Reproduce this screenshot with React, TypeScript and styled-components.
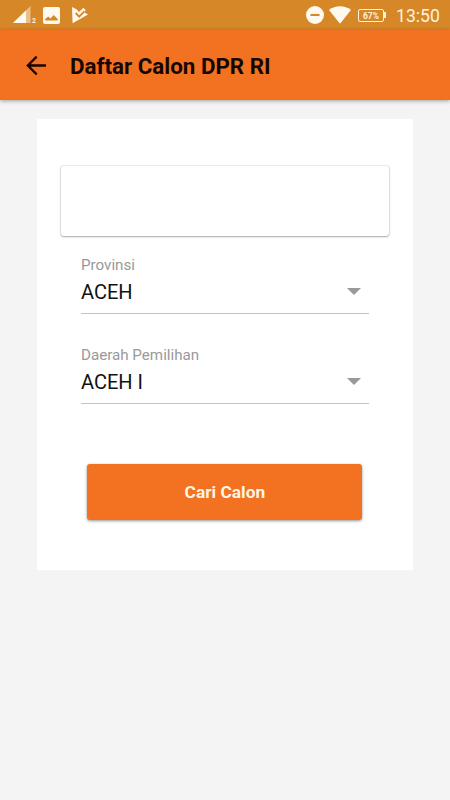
import React from "react";
import styled, { createGlobalStyle } from "styled-components";

const GlobalStyle = createGlobalStyle`
  *, *::before, *::after { box-sizing: border-box; }
  body { margin: 0; background: #f4f4f4; font-family: Roboto, sans-serif; }
`;

const Screen = styled.div`
  width: 450px;
  height: 800px;
  display: flex;
  flex-direction: column;
  background: #f4f4f4;
  overflow: hidden;
`;

const StatusBar = styled.div`
  height: 30px;
  flex: none;
  background: #d68728;
`;

const StatusRow = styled.div`
  height: 30px;
  display: flex;
  align-items: center;
  padding: 0 10px 0 12px;
  svg { display: block; flex: none; }
`;

const Spacer = styled.div`
  flex: 1;
`;

const Clock = styled.span`
  width: 44px;
  margin-left: 10px;
  font-size: 17.6px;
  line-height: 30px;
  color: #fff3dc;
  white-space: nowrap;
  padding-top: 1px;
`;

const SignalIndex = styled.span`
  font-size: 7px;
  font-weight: 700;
  line-height: 8px;
  color: #fff0d8;
  padding-top: 12px;
  width: 6px;
`;

const Battery = styled.div`
  display: flex;
  align-items: center;
  margin-left: 7px;
`;

const BatteryBody = styled.span`
  width: 26px;
  height: 13px;
  border: 1px solid #fff3dc;
  border-radius: 2px;
  color: #fff3dc;
  font-size: 8.5px;
  font-weight: 700;
  line-height: 12px;
  text-align: center;
`;

const BatteryTip = styled.span`
  width: 2px;
  height: 6px;
  background: #fff3dc;
`;

const Header = styled.header`
  height: 70px;
  flex: none;
  display: flex;
  align-items: center;
  background: #f37221;
  box-shadow: 0 1px 4px rgba(0, 0, 0, 0.35);
`;

const BackButton = styled.button`
  width: 24px;
  height: 24px;
  margin: 1px 0 0 24px;
  padding: 0;
  border: 0;
  background: none;
  svg { display: block; }
`;

const Title = styled.h1`
  margin: 1px 0 0 22px;
  font-size: 22.35px;
  font-weight: 700;
  line-height: 28px;
  color: #170500;
  white-space: nowrap;
`;

const Card = styled.main`
  width: 375.5px;
  height: 451px;
  margin: 19px 0 0 37px;
  padding: 47px 23.5px 0 24px;
  background: #fff;
`;

const BlankPanel = styled.div`
  height: 70px;
  border-radius: 3px;
  background: #fff;
  box-shadow: 0 0 1px 1px rgba(0, 0, 0, 0.08), 0 1px 2px rgba(0, 0, 0, 0.28);
`;

const Field = styled.div`
  height: 90px;
  padding: 20px 20px 0 20px;
`;

const Label = styled.div`
  font-size: 15.15px;
  line-height: 18px;
  color: #999;
`;

const SelectRow = styled.div`
  height: 40px;
  display: flex;
  justify-content: space-between;
  align-items: flex-start;
  padding: 5px 8px 0 0;
  border-bottom: 1px solid #c4c4c4;
  svg { display: block; margin-top: 8.5px; }
`;

const Value = styled.span`
  font-size: 20px;
  line-height: 26px;
  color: #111;
`;

const SubmitButton = styled.button`
  display: block;
  width: 275px;
  height: 56px;
  margin: 48px 0 0 26.4px;
  padding: 0 0 1px;
  border: 0;
  border-radius: 3px;
  background: #f37221;
  box-shadow: 0 1px 3px rgba(0, 0, 0, 0.42);
  font: 700 17.35px/24px Roboto, sans-serif;
  color: #fff5e4;
`;

const Gap = styled.span<{ $w: number }>`
  width: ${(p) => p.$w}px;
  flex: none;
`;

function SignalIcon() {
  return (
    <svg width="20" height="18" viewBox="0 0 20 18">
      <path d="M1 17 18.5 0V17Z" fill="#e9bf88" />
      <path d="M1 17 14 4.4V17Z" fill="#fffaf0" />
    </svg>
  );
}

function PictureIcon() {
  return (
    <svg width="17" height="17" viewBox="0 0 17 17">
      <rect width="17" height="17" rx="2" fill="#fffaf0" />
      <path d="M2.2 13.6V12L5.2 9.4l2.3 2.2 3.2-3.6 4 4v1.6Z" fill="#d68728" />
    </svg>
  );
}

function PlayCheckIcon() {
  return (
    <svg width="18" height="18" viewBox="0 0 18 18">
      <path d="M1 1 5.5 3.2 8 6 12.4 1.8 14.6 4 13.4 6.6 17 8.6 1.6 17.2Z" fill="#fffaf0" />
      <path d="m4.6 7 3.6 3.7 5.2-5.3" fill="none" stroke="#d68728" strokeWidth="1.8" />
    </svg>
  );
}

function DoNotDisturbIcon() {
  return (
    <svg width="18" height="18" viewBox="0 0 18 18">
      <circle cx="9" cy="9" r="9" fill="#fffaf0" />
      <rect x="4.5" y="8" width="9" height="2" fill="#d68728" />
    </svg>
  );
}

function WifiIcon() {
  return (
    <svg width="22" height="18" viewBox="0 0 22 18">
      <path d="M0 4C6.5-1 15.5-1 22 4L11 17.7Z" fill="#fffaf0" />
    </svg>
  );
}

function BackIcon() {
  return (
    <svg width="24" height="24" viewBox="0 0 24 24" fill="none" stroke="#170500" strokeWidth="2.3">
      <path d="M22 11.5H4M12.7 2.6 3.8 11.5l8.9 8.9" />
    </svg>
  );
}

function CaretIcon() {
  return (
    <svg width="14" height="7" viewBox="0 0 14 7">
      <path d="M0 0H14L7 7Z" fill="#999" />
    </svg>
  );
}

function SelectField({ label, value }: { label: string; value: string }) {
  return (
    <Field>
      <Label>{label}</Label>
      <SelectRow>
        <Value>{value}</Value>
        <CaretIcon />
      </SelectRow>
    </Field>
  );
}

export default function App() {
  return (
    <>
      <GlobalStyle />
      <Screen>
        <StatusBar>
          <StatusRow>
            <SignalIcon />
            <SignalIndex>2</SignalIndex>
            <Gap $w={5} />
            <PictureIcon />
            <Gap $w={11} />
            <PlayCheckIcon />
            <Spacer />
            <DoNotDisturbIcon />
            <Gap $w={5} />
            <WifiIcon />
            <Battery>
              <BatteryBody>67%</BatteryBody>
              <BatteryTip />
            </Battery>
            <Clock>13:50</Clock>
          </StatusRow>
        </StatusBar>
        <Header>
          <BackButton aria-label="Kembali">
            <BackIcon />
          </BackButton>
          <Title>Daftar Calon DPR RI</Title>
        </Header>
        <Card>
          <BlankPanel />
          <SelectField label="Provinsi" value="ACEH" />
          <SelectField label="Daerah Pemilihan" value="ACEH I" />
          <SubmitButton>Cari Calon</SubmitButton>
        </Card>
      </Screen>
    </>
  );
}
